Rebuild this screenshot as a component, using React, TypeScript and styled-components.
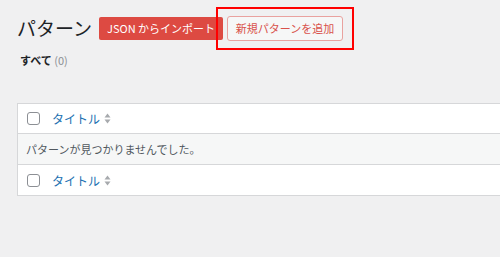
import React from 'react';
import styled, { createGlobalStyle } from 'styled-components';

const GlobalStyle = createGlobalStyle`
  html, body {
    margin: 0;
    padding: 0;
    overflow: hidden;
    background: #f0f0f1;
  }
  body {
    font-family: "Noto Sans CJK JP", "Noto Sans", sans-serif;
    color: #1d2327;
  }
`;

const Page = styled.div`
  padding: 7px 0 0 17px;
`;

const HeaderBar = styled.div`
  display: flex;
  align-items: center;
  height: 42px;
`;

const Title = styled.h1`
  margin: 0 7px 0 0;
  font-size: 19px;
  font-weight: 400;
  line-height: 1;
  color: #1d2327;
  padding-bottom: 2px;
`;

const ImportButton = styled.button`
  height: 23px;
  width: 124px;
  padding: 0;
  border: none;
  border-radius: 2px;
  background: #dd4a42;
  color: #fff;
  font-family: inherit;
  font-size: 11px;
  line-height: 23px;
  margin-top: 1px;
`;

const Highlight = styled.div`
  display: flex;
  margin-left: -7px;
  padding: 7px 9px;
  border: 2px solid #ff0000;
`;

const AddButton = styled.button`
  height: 25px;
  width: 116px;
  padding: 0;
  border: 1px solid #e9a29f;
  border-radius: 3px;
  background: #f6f7f7;
  color: #d9524b;
  font-family: inherit;
  font-size: 11px;
`;

const Filters = styled.div`
  margin: 3px 0 0 3px;
  font-size: 11px;
  line-height: 16px;
  font-weight: 700;
  color: #1d2327;
`;

const Count = styled.span`
  font-weight: 400;
  color: #8c8f94;
`;

const Table = styled.div`
  margin-top: 35px;
  width: 560px;
  background: #fff;
  border: 1px solid #d6d7d9;
`;

const Row = styled.div<{ $muted?: boolean; $last?: boolean }>`
  display: flex;
  align-items: center;
  height: ${(p) => (p.$last ? 30 : 29)}px;
  padding-left: 9px;
  background: ${(p) => (p.$muted ? '#f6f7f7' : '#fff')};
  border-bottom: ${(p) => (p.$last ? 'none' : '1px solid #d6d7d9')};
`;

const EmptyRow = styled(Row)`
  height: 30px;
  padding-left: 8px;
  font-size: 11px;
  color: #50575e;
`;

const Checkbox = styled.span`
  box-sizing: border-box;
  width: 13px;
  height: 13px;
  border: 1px solid #8c8f94;
  border-radius: 3px;
  background: #fff;
`;

const SortLink = styled.a`
  display: flex;
  align-items: center;
  margin-left: 12px;
  color: #2271b1;
  font-size: 12px;
  text-decoration: none;
`;

const SortIcon = () => (
  <svg width="7" height="11" viewBox="0 0 7 11" style={{ marginLeft: 4 }}>
    <path d="M3.5 0.5 L6.5 4.5 H0.5 Z" fill="#a7aaad" />
    <path d="M3.5 10.5 L6.5 6.5 H0.5 Z" fill="#a7aaad" />
  </svg>
);

const HeadRow = ({ last }: { last?: boolean }) => (
  <Row $last={last}>
    <Checkbox />
    <SortLink>
      タイトル
      <SortIcon />
    </SortLink>
  </Row>
);

export default function App() {
  return (
    <>
      <GlobalStyle />
      <Page>
        <HeaderBar>
          <Title>パターン</Title>
          <ImportButton>JSON からインポート</ImportButton>
          <Highlight>
            <AddButton>新規パターンを追加</AddButton>
          </Highlight>
        </HeaderBar>
        <Filters>
          すべて <Count>(0)</Count>
        </Filters>
        <Table>
          <HeadRow />
          <EmptyRow $muted>パターンが見つかりませんでした。</EmptyRow>
          <HeadRow last />
        </Table>
      </Page>
    </>
  );
}
